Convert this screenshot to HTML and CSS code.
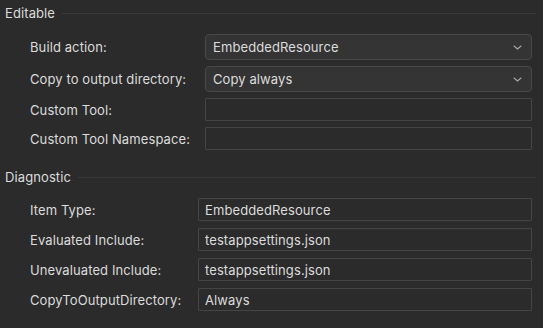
FILE: index.html
```html
<!DOCTYPE html>
<html lang="en">
<head>
    <meta charset="UTF-8">
    <title>Properties</title>
    <link rel="stylesheet" href="styles.css">
</head>
<body>
    <div class="panel">
        <section class="group">
            <div class="group-title"><span>Editable</span></div>
            <div class="rows editable">
                <div class="row">
                    <label>Build action:</label>
                    <div class="select">
                        <span>EmbeddedResource</span>
                        <svg width="9" height="5" viewBox="0 0 9 5" fill="none" stroke="currentColor" stroke-width="1.1" stroke-linecap="round" stroke-linejoin="round">
                            <polyline points="1 1 4.5 4 8 1"></polyline>
                        </svg>
                    </div>
                </div>
                <div class="row">
                    <label>Copy to output directory:</label>
                    <div class="select">
                        <span>Copy always</span>
                        <svg width="9" height="5" viewBox="0 0 9 5" fill="none" stroke="currentColor" stroke-width="1.1" stroke-linecap="round" stroke-linejoin="round">
                            <polyline points="1 1 4.5 4 8 1"></polyline>
                        </svg>
                    </div>
                </div>
                <div class="row">
                    <label>Custom Tool:</label>
                    <div class="field"></div>
                </div>
                <div class="row">
                    <label>Custom Tool Namespace:</label>
                    <div class="field"></div>
                </div>
            </div>
        </section>

        <section class="group">
            <div class="group-title"><span>Diagnostic</span></div>
            <div class="rows diagnostic">
                <div class="row">
                    <label>Item Type:</label>
                    <div class="field">EmbeddedResource</div>
                </div>
                <div class="row">
                    <label>Evaluated Include:</label>
                    <div class="field">testappsettings.json</div>
                </div>
                <div class="row">
                    <label>Unevaluated Include:</label>
                    <div class="field">testappsettings.json</div>
                </div>
                <div class="row">
                    <label>CopyToOutputDirectory:</label>
                    <div class="field">Always</div>
                </div>
            </div>
        </section>
    </div>
</body>
</html>
```

FILE: styles.css
```css
:root {
    --bg: #2b2b2b;
    --text: #dcdcdc;
    --select-bg: #343434;
    --select-border: #484848;
    --field-border: #454545;
    --line: #3a3a3a;
    --chevron: #a8a8a8;
}

* {
    box-sizing: border-box;
    margin: 0;
    padding: 0;
}

body {
    font-family: Inter, "Noto Sans", sans-serif;
    font-size: 13px;
    letter-spacing: 0.1px;
    background-color: var(--bg);
    color: var(--text);
    width: 543px;
    height: 328px;
    overflow: hidden;
}

.group-title {
    display: flex;
    align-items: center;
    gap: 7px;
    height: 26px;
    padding: 0 7px 0 5px;
}

.group-title::after {
    content: "";
    flex: 1;
    height: 1px;
    background-color: var(--line);
}

.group + .group {
    margin-top: 14px;
}

.rows {
    display: flex;
    flex-direction: column;
    padding: 8px 11px 0 30px;
}

.editable {
    gap: 6px;
}

.diagnostic {
    gap: 7px;
}

.row {
    display: flex;
    align-items: center;
}

.editable label {
    width: 175px;
}

.diagnostic label {
    width: 168px;
}

.select {
    flex: 1;
    height: 26px;
    display: flex;
    align-items: center;
    justify-content: space-between;
    padding: 0 9px 0 7px;
    background-color: var(--select-bg);
    border: 1px solid var(--select-border);
    border-radius: 4px;
}

.select svg {
    color: var(--chevron);
}

.field {
    flex: 1;
    height: 23px;
    display: flex;
    align-items: center;
    padding: 0 6px;
    border: 1px solid var(--field-border);
    border-radius: 1px;
}
```
